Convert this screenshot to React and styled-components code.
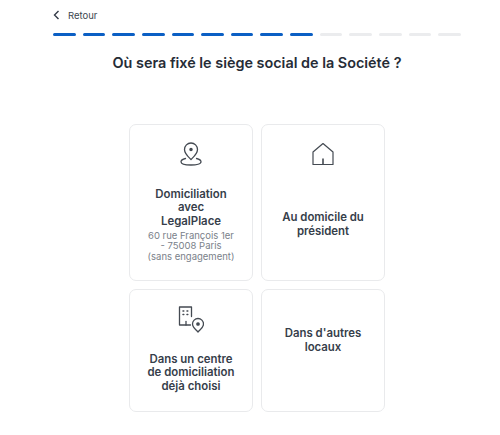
import React from "react";
import styled, { createGlobalStyle } from "styled-components";

const GlobalStyle = createGlobalStyle`
  html, body {
    margin: 0;
    padding: 0;
    background: #fff;
    font-family: Inter, "Liberation Sans", sans-serif;
  }
`;

const Page = styled.div`
  width: 408px;
  padding-left: 53px;
  padding-top: 8px;
  display: flex;
  flex-direction: column;
`;

const BackLink = styled.a`
  display: flex;
  align-items: center;
  gap: 8px;
  height: 14px;
  font-size: 9.5px;
  color: #3c4650;
`;

const Progress = styled.div`
  display: flex;
  gap: 7px;
  margin-top: 11px;
`;

const Segment = styled.div`
  flex: 1;
  height: 3px;
  border-radius: 2px;
  background: ${(p) => (p.$done ? "#0b5fc4" : "#ebecee")};
`;

const Title = styled.h1`
  margin: 18px 0 0;
  font-size: 14.4px;
  line-height: 18px;
  font-weight: 600;
  text-align: center;
  color: #262c36;
`;

const Grid = styled.div`
  display: grid;
  grid-template-columns: 124px 124px;
  grid-template-rows: 157px 123px;
  gap: 8px;
  justify-content: center;
  margin-top: 52px;
`;

const Card = styled.div`
  box-sizing: border-box;
  border: 1px solid #e9eaec;
  border-radius: 7px;
  background: #fff;
  padding: 15px 12px 8px;
  display: flex;
  flex-direction: column;
  align-items: center;
  text-align: center;
`;

const IconBox = styled.div`
  height: 28px;
  display: flex;
  align-items: center;
  justify-content: center;
  color: #444a52;
`;

const Body = styled.div`
  flex: 1;
  display: flex;
  flex-direction: column;
  justify-content: center;
  padding: ${(p) => (p.$plain ? "0 0 26px" : "10px 0 0")};
`;

const Label = styled.div`
  font-size: 11.4px;
  line-height: 13.6px;
  font-weight: 600;
  color: #363e4a;
`;

const Note = styled.div`
  font-size: 9.5px;
  line-height: 10.5px;
  color: #7a818a;
  margin-top: 2px;
`;

const PinIcon = () => (
  <svg width="24" height="26" viewBox="0 0 24 26" fill="none" stroke="currentColor" strokeWidth="1.3" strokeLinecap="round" strokeLinejoin="round">
    <path d="M12 18.500c-3-3-6.500-5.800-6.500-10a6.500 6.500 0 0 1 13 0c0 4.200-3.500 7-6.500 10z" />
    <circle cx="12" cy="8.500" r="1.100" fill="currentColor" />
    <path d="M6.500 17.500C3.500 18.300 2 19.400 2 20.700 2 22.800 6.500 24 12 24s10-1.200 10-3.300c0-1.300-1.500-2.400-4.500-3.200" />
  </svg>
);

const HomeIcon = () => (
  <svg width="24" height="24" viewBox="0 0 24 24" fill="none" stroke="currentColor" strokeWidth="1.2" strokeLinejoin="round">
    <path d="M2 10 12 1.500 22 10v12.500H2z" />
    <path d="M12 16.500v6" strokeWidth="1.600" />
  </svg>
);

const OfficeIcon = () => (
  <svg width="26" height="27" viewBox="0 0 26 27" fill="none" stroke="currentColor" strokeWidth="1.3" strokeLinejoin="round" strokeLinecap="round">
    <path d="M12.500 19H1.500V1h12v9.500" />
    <path d="M8 19v-3.500" />
    <path d="M5 5h.8M9 5h.8M5 8.500h.8M9 8.500h.8" strokeWidth="1.500" />
    <path d="M20 26c-2.600-2.700-5.500-4.800-5.500-8a5.500 5.500 0 0 1 11 0c0 3.200-2.900 5.300-5.500 8z" />
    <circle cx="20" cy="18" r="1.200" fill="currentColor" />
  </svg>
);

const options = [
  {
    icon: <PinIcon />,
    label: ["Domiciliation", "avec", "LegalPlace"],
    note: ["60 rue François 1er", "- 75008 Paris", "(sans engagement)"],
  },
  { icon: <HomeIcon />, label: ["Au domicile du", "président"] },
  { icon: <OfficeIcon />, label: ["Dans un centre", "de domiciliation", "déjà choisi"] },
  { label: ["Dans d'autres", "locaux"] },
];

const lines = (list) => list.map((l) => <div key={l}>{l}</div>);

export default function App() {
  return (
    <>
      <GlobalStyle />
      <Page>
        <BackLink>
          <svg width="7" height="10" viewBox="0 0 7 10" fill="none" stroke="#333b47" strokeWidth="1.400">
            <path d="M5.500 1 1.500 5l4 4" />
          </svg>
          Retour
        </BackLink>
        <Progress>
          {Array.from({ length: 14 }, (_, i) => (
            <Segment key={i} $done={i < 9} />
          ))}
        </Progress>
        <Title>Où sera fixé le siège social de la Société ?</Title>
        <Grid>
          {options.map((o) => (
            <Card key={o.label[0]}>
              {o.icon && <IconBox>{o.icon}</IconBox>}
              <Body $plain={!o.icon}>
                <Label>{lines(o.label)}</Label>
                {o.note && <Note>{lines(o.note)}</Note>}
              </Body>
            </Card>
          ))}
        </Grid>
      </Page>
    </>
  );
}
